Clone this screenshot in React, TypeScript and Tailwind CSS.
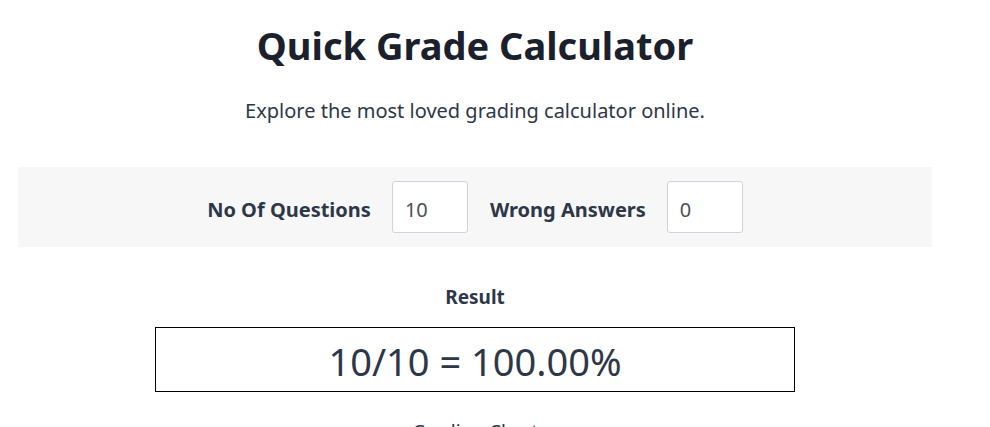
export default function App() {
  return (
    <div className="min-h-screen bg-white font-['Noto_Sans','Open_Sans',sans-serif] text-[#212529]">
      <div className="w-[914px] ml-[18px] flex flex-col items-center">
        {/* heading */}
        <h1 className="mt-[22px] text-[38px] leading-[46px] font-bold text-[#1a202c]">
          Quick Grade Calculator
        </h1>
        <p className="mt-[28px] text-[20px] leading-[30px] text-[#2d3748]">
          Explore the most loved grading calculator online.
        </p>

        {/* inputs */}
        <div className="mt-[41px] w-full h-[80px] bg-[#f7f7f7] flex items-center justify-center">
          <label className="pt-[5px] text-[20px] font-bold text-[#2d3748]">No Of Questions</label>
          <input
            type="text"
            defaultValue="10"
            className="ml-[21px] w-[76px] h-[52px] bg-white border border-[#ced4da] rounded-[3px] px-[12px] pt-[4px] text-[20px] text-[#495057] focus:outline-none"
          />
          <label className="ml-[22px] pt-[5px] text-[20px] font-bold text-[#2d3748]">Wrong Answers</label>
          <input
            type="text"
            defaultValue="0"
            className="ml-[21px] w-[76px] h-[52px] bg-white border border-[#ced4da] rounded-[3px] px-[12px] pt-[4px] text-[20px] text-[#495057] focus:outline-none"
          />
        </div>

        {/* result */}
        <p className="mt-[37px] text-[19px] leading-[27px] font-bold text-[#2d3748]">Result</p>
        <div className="mt-[16px] w-[640px] h-[65px] border border-black flex items-center justify-center">
          <span className="pt-[4px] text-[38px] text-[#2d3748]">10/10 = 100.00%</span>
        </div>

        <p className="mt-[27px] text-[19px] leading-[27px] text-[#2d3748]">Grading Chart</p>
      </div>
    </div>
  )
}
